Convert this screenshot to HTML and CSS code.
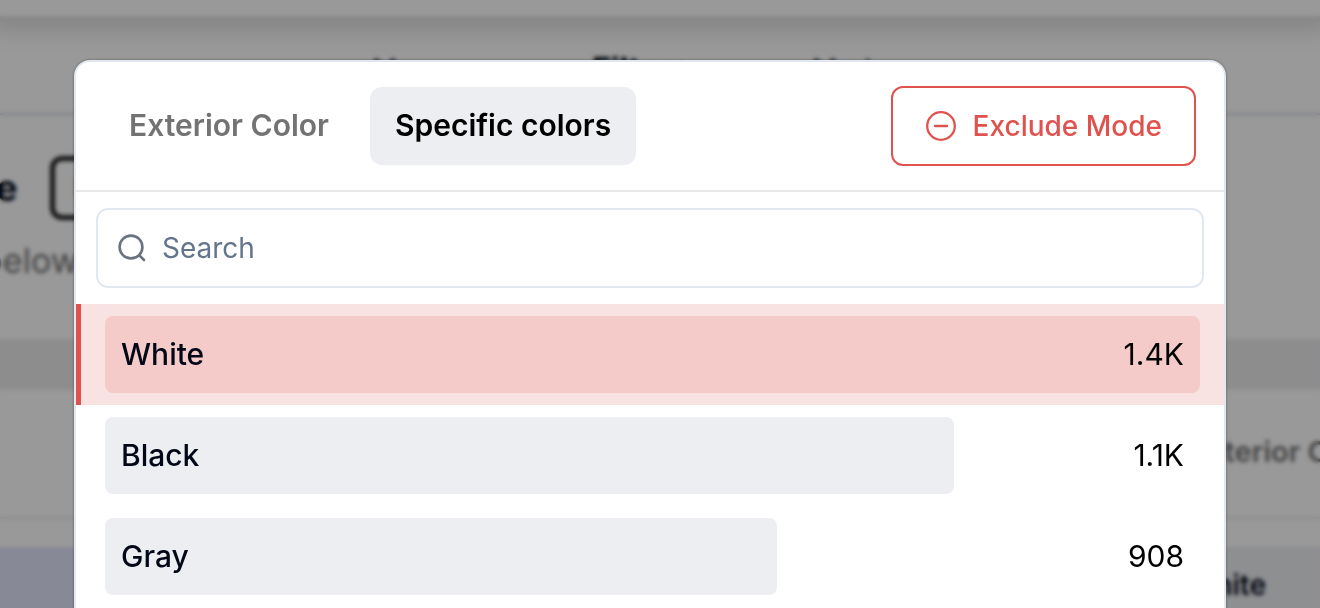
FILE: index.html
```html
<!DOCTYPE html>
<html lang="en">
  <head>
    <meta charset="UTF-8" />
    <meta name="viewport" content="width=device-width, initial-scale=1.0" />
    <title>Exterior Color</title>
    <link rel="stylesheet" href="styles.css">
  </head>
  <body>
    <div class="page" aria-hidden="true">
      <div class="topbar"></div>
      <div class="page-tabs">
        <span>Menu</span>
        <span class="current">Filters</span>
        <span>Mode</span>
      </div>
      <div class="intro">
        <div class="intro-title">Here <span class="badge">Info</span></div>
        <p class="intro-text">below</p>
      </div>
      <div class="band"></div>
      <div class="panel-head">Exterior Color</div>
      <div class="panel-gap"></div>
      <div class="panel-row">
        <div class="swatch"></div>
        <div class="value">White</div>
      </div>
    </div>

    <div class="overlay">
      <div class="dialog" role="dialog" aria-label="Exterior Color">
        <div class="dialog-header">
          <div class="tabs" role="tablist">
            <button class="tab" type="button" role="tab" aria-selected="false">Exterior Color</button>
            <button class="tab active" type="button" role="tab" aria-selected="true">Specific colors</button>
          </div>
          <button class="exclude" type="button">
            <svg width="32" height="32" viewBox="0 0 32 32" fill="none" stroke="currentColor" stroke-width="2.3" stroke-linecap="round">
              <circle cx="16" cy="16" r="13.8" />
              <path d="M10 16h12" />
            </svg>
            Exclude Mode
          </button>
        </div>

        <label class="search">
          <svg width="32" height="32" viewBox="0 0 32 32" fill="none" stroke="currentColor" stroke-width="2.6" stroke-linecap="round">
            <circle cx="15" cy="15" r="11.4" />
            <path d="M23.4 23.4L28 28" />
          </svg>
          <input type="text" placeholder="Search" aria-label="Search" />
        </label>

        <ul class="options">
          <li>
            <button class="option excluded" type="button">
              <span class="bar" style="width: 100%"><span class="name">White</span></span>
              <span class="count">1.4K</span>
            </button>
          </li>
          <li>
            <button class="option" type="button">
              <span class="bar" style="width: 77.5%"><span class="name">Black</span></span>
              <span class="count">1.1K</span>
            </button>
          </li>
          <li>
            <button class="option" type="button">
              <span class="bar" style="width: 61.4%"><span class="name">Gray</span></span>
              <span class="count">908</span>
            </button>
          </li>
        </ul>
      </div>
    </div>
  </body>
</html>
```

FILE: styles.css
```css
* {
  box-sizing: border-box;
}

body {
  margin: 0;
  height: 100vh;
  overflow: hidden;
  background: #ffffff;
  color: #020817;
  font-family: "Inter", sans-serif;
}

button,
input {
  font-family: inherit;
}

/* page behind the dialog */
.page {
  font-size: 28px;
}
.topbar {
  height: 19px;
  border-bottom: 3px solid #e2e4e8;
  box-shadow: 0 0 24px 10px rgba(0, 0, 0, 0.15);
}
.page-tabs {
  display: grid;
  grid-template-columns: repeat(3, 220px);
  height: 96px;
  padding: 31px 0 0 372px;
  line-height: 40px;
  border-bottom: 2px solid #d0d6e4;
}
.page-tabs .current {
  font-size: 32px;
  font-weight: 700;
}
.intro {
  height: 224px;
  padding-top: 41px;
}
.intro-title {
  display: flex;
  align-items: center;
  gap: 32px;
  margin-left: -66px;
  font-size: 36px;
  font-weight: 700;
}
.badge {
  padding: 0 20px;
  border: 5px solid #1f1f1f;
  border-radius: 12px;
  font-size: 28px;
  line-height: 54px;
}
.intro-text {
  margin: 19px 0 0 -18px;
  font-size: 34px;
  line-height: 44px;
  color: #737373;
}
.band {
  height: 51px;
  background: #ebebed;
}
.panel-head {
  height: 129px;
  padding: 42px 0 0 1190px;
  border-bottom: 2px solid #e5e7eb;
  font-size: 29px;
  font-weight: 600;
  line-height: 40px;
  color: #737373;
  white-space: nowrap;
}
.panel-gap {
  height: 28px;
}
.panel-row {
  display: grid;
  grid-template-columns: 1fr 1fr;
  height: 80px;
}
.swatch {
  background: #e2e4fc;
}
.value {
  padding: 18px 54px 0 0;
  background: #edeef2;
  font-weight: 600;
  line-height: 40px;
  text-align: right;
}

/* dialog */
.overlay {
  position: fixed;
  inset: 0;
  padding: 60px 94px 0 74px;
  overflow: hidden;
  background: rgba(0, 0, 0, 0.4);
  backdrop-filter: blur(2px);
}
.dialog {
  min-height: 100vh;
  background: #ffffff;
  border: 2px solid #e2e8f0;
  border-radius: 16px;
  box-shadow: 0 0 3px rgba(0, 0, 0, 0.4);
}
.dialog-header {
  display: flex;
  align-items: center;
  justify-content: space-between;
  padding: 24px 28px;
  border-bottom: 2px solid #e8e8e8;
}
.tabs {
  display: flex;
  gap: 16px;
}
.tab {
  padding: 18px 25px 20px;
  border: 0;
  border-radius: 12px;
  background: transparent;
  color: #737373;
  font-size: 30px;
  font-weight: 600;
  line-height: 40px;
}
.tab.active {
  background: #edeef2;
  color: #000000;
}
.exclude {
  display: flex;
  align-items: center;
  gap: 16px;
  height: 80px;
  padding: 0 32px;
  border: 2px solid #e0524d;
  border-radius: 12px;
  background: #ffffff;
  color: #e0524d;
  font-size: 28px;
  font-weight: 500;
}
.search {
  display: flex;
  align-items: center;
  gap: 14px;
  height: 80px;
  margin: 16px 20px;
  padding: 0 18px;
  border: 2px solid #e2e8f0;
  border-radius: 12px;
  color: #6b7280;
}
.search input {
  flex: 1;
  min-width: 0;
  padding: 0;
  border: 0;
  outline: 0;
  background: transparent;
  font-size: 28px;
  line-height: 40px;
}
.search input::placeholder {
  color: #64748b;
}

/* options with a bar for the share of each colour */
.options {
  margin: 0;
  padding: 0;
  list-style: none;
}
.option {
  display: grid;
  align-items: center;
  width: 100%;
  padding: 12px 24px;
  border: 0;
  border-left: 5px solid transparent;
  background: transparent;
  color: #020817;
  font-size: 30px;
  line-height: 45px;
}
.option.excluded {
  border-left-color: #e0524d;
  background: #f9e2e2;
}
.bar,
.count {
  grid-area: 1 / 1;
}
.bar {
  padding: 16px;
  border-radius: 8px;
  background: #edeef2;
  text-align: left;
}
.excluded .bar {
  background: #f5cbc9;
}
.name {
  font-weight: 500;
}
.count {
  justify-self: end;
  padding-right: 16px;
  color: #000000;
}
```
